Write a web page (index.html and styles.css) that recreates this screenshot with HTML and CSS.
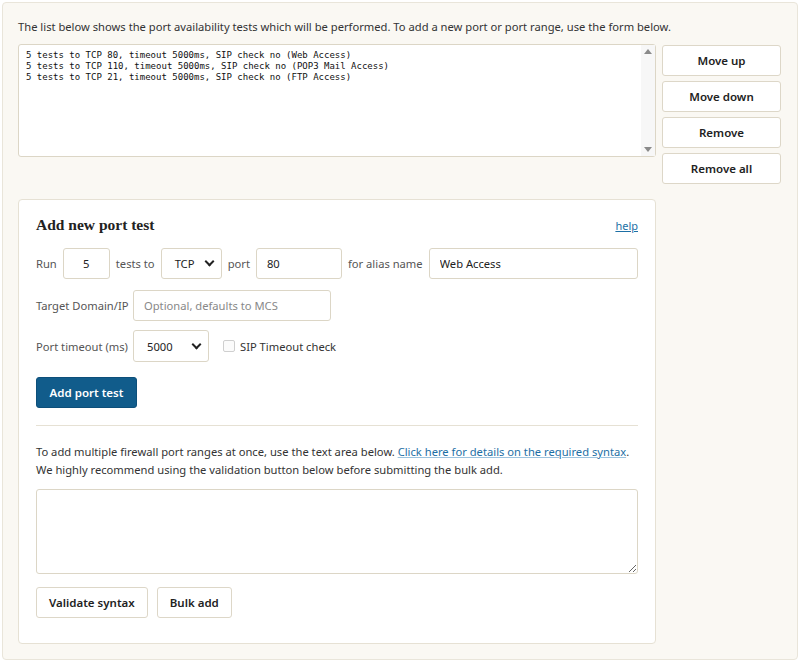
FILE: index.html
```html
<!DOCTYPE html>
<html lang="en">
<head>
    <meta charset="UTF-8">
    <title>Port Tests</title>
    <link rel="stylesheet" href="styles.css">
</head>
<body>
    <div class="panel">
        <p class="intro">The list below shows the port availability tests which will be performed. To add a new port or port range, use the form below.</p>

        <!-- Test list with ordering buttons -->
        <div class="list-row">
            <div class="test-list">
                <div class="test-lines">
                    <div>5 tests to TCP 80, timeout 5000ms, SIP check no (Web Access)</div>
                    <div>5 tests to TCP 110, timeout 5000ms, SIP check no (POP3 Mail Access)</div>
                    <div>5 tests to TCP 21, timeout 5000ms, SIP check no (FTP Access)</div>
                </div>
                <div class="scrollbar">
                    <span class="arrow up"></span>
                    <span class="arrow down"></span>
                </div>
            </div>
            <div class="list-actions">
                <button class="btn">Move up</button>
                <button class="btn">Move down</button>
                <button class="btn">Remove</button>
                <button class="btn">Remove all</button>
            </div>
        </div>

        <!-- Add new port test -->
        <div class="card">
            <div class="card-head">
                <h3>Add new port test</h3>
                <a href="#" class="help">help</a>
            </div>

            <div class="form-row first">
                <label>Run</label>
                <input type="text" class="field num" value="5">
                <label>tests to</label>
                <div class="select proto"><span>TCP</span><i class="chev"></i></div>
                <label>port</label>
                <input type="text" class="field port" value="80">
                <label>for alias name</label>
                <input type="text" class="field alias" value="Web Access">
            </div>

            <div class="form-row second">
                <label class="wide">Target Domain/IP</label>
                <input type="text" class="field target" placeholder="Optional, defaults to MCS">
            </div>

            <div class="form-row third">
                <label class="wide">Port timeout (ms)</label>
                <div class="select timeout"><span>5000</span><i class="chev"></i></div>
                <span class="check"><span class="box"></span>SIP Timeout check</span>
            </div>

            <button class="btn primary">Add port test</button>

            <hr>

            <p class="bulk-text">To add multiple firewall port ranges at once, use the text area below. <a href="#">Click here for details on the required syntax</a>.<br>
            We highly recommend using the validation button below before submitting the bulk add.</p>

            <textarea class="bulk"></textarea>

            <div class="bulk-actions">
                <button class="btn">Validate syntax</button>
                <button class="btn">Bulk add</button>
            </div>
        </div>
    </div>
</body>
</html>
```

FILE: styles.css
```css
body {
    margin: 0;
    padding: 2px;
    background: #ffffff;
    font-family: 'Noto Sans', 'Open Sans', sans-serif;
    font-size: 11.2px;
    color: #333;
}

.panel {
    background: #faf8f3;
    border: 1px solid #e9e5da;
    border-radius: 4px;
    padding: 14px 15px 15px 15px;
    height: 627px;
}

.intro {
    margin: 0 0 7px;
    line-height: 20px;
    color: #333;
}

.list-row {
    display: flex;
    gap: 6px;
    align-items: flex-start;
}

.test-list {
    width: 636px;
    height: 111px;
    display: flex;
    background: #fff;
    border: 1px solid #dcd6c6;
    border-radius: 3px;
}

.test-lines {
    flex: 1;
    padding: 5px 7px;
    font-family: 'DejaVu Sans Mono', monospace;
    font-size: 9px;
    line-height: 11px;
    color: #111;
}

.scrollbar {
    width: 14px;
    background: #f7f7f7;
    display: flex;
    flex-direction: column;
    justify-content: space-between;
    align-items: center;
    padding: 4px 0;
}

.arrow {
    width: 0;
    height: 0;
    border-left: 4px solid transparent;
    border-right: 4px solid transparent;
}

.arrow.up {
    border-bottom: 5px solid #8a8a8a;
}

.arrow.down {
    border-top: 5px solid #8a8a8a;
}

.list-actions {
    display: flex;
    flex-direction: column;
    gap: 5px;
    margin-top: 1px;
}

.btn {
    font-family: inherit;
    font-size: 11.5px;
    font-weight: 600;
    color: #222;
    background: #fff;
    border: 1px solid #ddd7c8;
    border-radius: 3px;
    height: 31px;
    padding: 0 16px;
    cursor: pointer;
}

.list-actions .btn {
    width: 119px;
}

.card {
    margin-top: 15px;
    background: #fff;
    border: 1px solid #e6e1d4;
    border-radius: 4px;
    padding: 16px 17px 25px 17px;
    width: 602px;
}

.card-head {
    display: flex;
    justify-content: space-between;
    align-items: baseline;
    margin-bottom: 13px;
    line-height: 18px;
}

.card-head h3 {
    margin: 0;
    font-family: 'Liberation Serif', 'DejaVu Serif', serif;
    font-size: 15.5px;
    font-weight: bold;
    color: #222;
}

.help {
    font-size: 11px;
    color: #1d6fa5;
    text-decoration: underline;
}

.form-row {
    display: flex;
    align-items: center;
    gap: 7px;
    white-space: nowrap;
}

.form-row.first {
    gap: 6px;
    margin-bottom: 11px;
}

.form-row.second {
    margin-bottom: 9px;
}

.form-row label {
    color: #555;
}

.form-row label.wide {
    width: 90px;
}

.field, .select {
    box-sizing: border-box;
    height: 31px;
    border: 1px solid #dcd6c6;
    border-radius: 3px;
    font-family: inherit;
    font-size: 11.2px;
    color: #222;
    padding: 0 10px;
    background: #fff;
}

.field::placeholder {
    color: #888;
}

.num {
    width: 47px;
    text-align: center;
}

.port {
    width: 86px;
}

.alias {
    flex: 1;
}

.target {
    width: 198px;
}

.select {
    display: flex;
    align-items: center;
    justify-content: space-between;
    padding: 0 8px 0 13px;
}

.proto {
    width: 61px;
}

.timeout {
    width: 76px;
    height: 32px;
}

.chev {
    width: 5px;
    height: 5px;
    border-right: 2px solid #222;
    border-bottom: 2px solid #222;
    transform: rotate(45deg);
    margin-top: -4px;
}

.check {
    display: flex;
    align-items: center;
    gap: 5px;
    margin-left: 7px;
    color: #333;
}

.box {
    width: 10px;
    height: 10px;
    border: 1px solid #cfcfcf;
    border-radius: 2px;
    background: #fbfbfb;
}

.btn.primary {
    margin-top: 15px;
    background: #115c8b;
    border-color: #0d4f7a;
    color: #fff;
    width: 101px;
    padding: 0;
}

hr {
    border: none;
    border-top: 1px solid #e6e1d4;
    margin: 17px 0 17px;
}

.bulk-text {
    margin: 0 0 10px;
    line-height: 18px;
    color: #333;
}

.bulk-text a {
    color: #1d6fa5;
    text-decoration: underline;
    text-decoration-color: #9cc3de;
}

.bulk {
    display: block;
    box-sizing: border-box;
    width: 602px;
    height: 85px;
    border: 1px solid #dcd6c6;
    border-radius: 3px;
    margin: 0 0 13px;
}

.bulk-actions {
    display: flex;
    gap: 9px;
}

.bulk-actions .btn {
    padding: 0 12px;
}
```
